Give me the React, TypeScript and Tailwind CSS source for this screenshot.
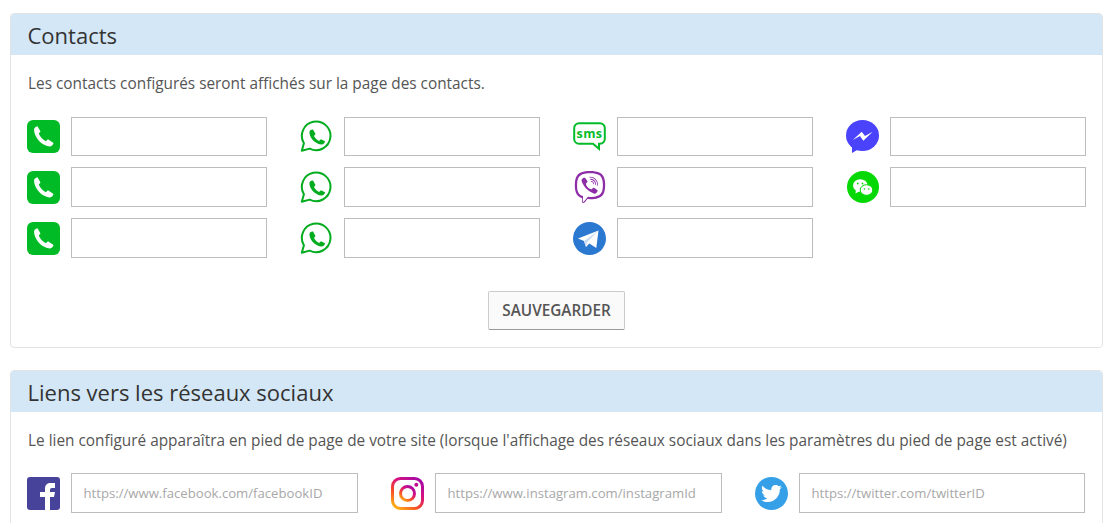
import React from "react";
import { FaViber, FaTwitter } from "react-icons/fa";

const PhoneIcon = () => (
  <svg width="33" height="33" viewBox="0 0 33 33">
    <rect width="33" height="33" rx="6" fill="#00bb26" />
    <path
      d="M7 9.500C7 8 8.500 6.500 10.500 6.200L13.500 11.500L11.800 13.500C12.800 16.500 15.800 19.800 18.800 21.300L21 19.300L26.500 23C26 25 24.500 26.500 22.500 26.500C14.500 25.500 7.500 18 7 9.500Z"
      fill="white"
    />
  </svg>
);

const WhatsappIcon = () => (
  <svg width="33" height="33" viewBox="0 0 33 33">
    <path
      d="M1.800 30.800L3.900 23.200A14.300 14.300 0 1 1 9.700 28.600Z"
      fill="white"
      stroke="#04ac1f"
      strokeWidth="2"
      strokeLinejoin="round"
    />
    <path
      d="M9.500 11.500C10 10 11.500 9.200 13 9.500L15.500 14L14 16C15 18 17 20 19 21L21 19.200L25 21.300C25 23.300 23 24.800 21 24.500C14.500 23.500 8.800 17 9.500 11.500Z"
      fill="#04ac1f"
    />
  </svg>
);

const SmsIcon = () => (
  <svg width="33" height="29" viewBox="0 0 33 29">
    <path
      d="M6 1.200h21a4.800 4.800 0 0 1 4.800 4.800v11a4.800 4.800 0 0 1-4.800 4.800h-1v5l-6-5H6a4.800 4.800 0 0 1-4.800-4.800V6A4.800 4.800 0 0 1 6 1.200z"
      fill="white"
      stroke="#04bb2a"
      strokeWidth="2"
    />
    <text
      x="16.500"
      y="15.500"
      textAnchor="middle"
      fontSize="12.500"
      fontWeight="700"
      letterSpacing="0.4"
      fill="#04bb2a"
      fontFamily="'Open Sans', sans-serif"
    >
      sms
    </text>
  </svg>
);

const ViberIcon = () => (
  <div className="w-[33px] h-[33px] flex items-center justify-center">
    <FaViber className="text-[#8e2da8] w-[32px] h-[32px]" />
  </div>
);

const TelegramIcon = () => (
  <svg width="33" height="33" viewBox="0 0 33 33">
    <circle cx="16.500" cy="16.500" r="16.500" fill="#2b78d0" />
    <path d="M25.500 8.500L5 16.500L11 19L13 25L16.300 21.500L23.300 26Z" fill="white" />
    <path d="M25.500 8.500L11 19L13 25L13.800 20.500Z" fill="#c8dcf3" />
  </svg>
);

const MessengerIcon = () => (
  <svg width="33" height="33" viewBox="0 0 33 33">
    <ellipse cx="16.500" cy="15.500" rx="16.500" ry="15.500" fill="#4a43fb" />
    <path d="M6 25L6 33L13 29Z" fill="#4a43fb" />
    <path d="M6.700 20L15.700 11.700L19 16L26.700 11.700L17.300 20.700L14 16Z" fill="white" />
  </svg>
);

const WechatIcon = () => (
  <svg width="32" height="32" viewBox="0 0 32 32">
    <circle cx="16" cy="16" r="16" fill="#06d806" />
    <ellipse cx="13.300" cy="14.500" rx="7.300" ry="6.300" fill="white" />
    <path d="M9 18.500L8.500 22.500L13 20Z" fill="white" />
    <ellipse cx="19.500" cy="19" rx="6.300" ry="5.300" fill="white" stroke="#06d806" strokeWidth="1" />
    <circle cx="10.800" cy="12.500" r="0.900" fill="#06d806" />
    <circle cx="15.500" cy="12.500" r="0.900" fill="#06d806" />
    <circle cx="17.500" cy="18" r="0.800" fill="#06d806" />
    <circle cx="21.800" cy="18" r="0.800" fill="#06d806" />
  </svg>
);

const FacebookIcon = () => (
  <svg width="33" height="33" viewBox="0 0 33 33">
    <rect width="33" height="33" rx="3" fill="#47429a" />
    <path
      d="M13 33V20H13V15H18V11.500C18 8 20 6 24 6H28V11H25C23.500 11 23 11.700 23 13V15H28L27 20H23V33H18V20H13Z"
      fill="white"
    />
  </svg>
);

const InstagramIcon = () => (
  <svg width="33" height="33" viewBox="0 0 33 33">
    <defs>
      <linearGradient id="ig" x1="0.15" y1="1" x2="0.85" y2="0">
        <stop offset="0" stopColor="#fdb015" />
        <stop offset="0.35" stopColor="#f6482a" />
        <stop offset="0.65" stopColor="#d8127e" />
        <stop offset="1" stopColor="#a509a8" />
      </linearGradient>
    </defs>
    <rect x="1.500" y="1.500" width="30" height="30" rx="8" fill="none" stroke="url(#ig)" strokeWidth="3" />
    <circle cx="16.500" cy="16.500" r="7" fill="none" stroke="url(#ig)" strokeWidth="3" />
    <circle cx="25.300" cy="7.700" r="2" fill="#c00c94" />
  </svg>
);

const TwitterIcon = () => (
  <div className="w-[33px] h-[33px] rounded-full bg-[#35a0e8] flex items-center justify-center">
    <FaTwitter className="text-white w-[21px] h-[21px]" />
  </div>
);

const Field = ({
  icon,
  height,
  placeholder,
}: {
  icon: React.ReactNode;
  height: string;
  placeholder?: string;
}) => (
  <div className="flex items-center">
    <div className="w-[33px] flex justify-center shrink-0">{icon}</div>
    <input
      placeholder={placeholder}
      className={`ml-[11px] min-w-0 flex-1 border border-[#bdbdbd] bg-white px-[11.5px] text-[13.15px] text-[#555] outline-none placeholder:text-[#a8a8a8] ${height}`}
    />
  </div>
);

const Panel = ({
  title,
  text,
  children,
}: {
  title: string;
  text: string;
  children: React.ReactNode;
}) => (
  <section className="rounded-[4px] border border-[#e3e3e3] bg-white overflow-hidden">
    <h2 className="bg-[#d4e7f6] h-[41px] pl-[16.5px] text-[22px] leading-[42px] text-[#333]">
      {title}
    </h2>
    <div className="pt-[19px] px-[16px]">
      <p className="ml-[1px] text-[15.36px] leading-[20px] text-[#555]">{text}</p>
      {children}
    </div>
  </section>
);

export default function App() {
  return (
    <div className="h-[523px] overflow-hidden bg-white pt-[13px] pl-[10px] pr-[9px] font-['Open_Sans',sans-serif]">
      <Panel
        title="Contacts"
        text="Les contacts configurés seront affichés sur la page des contacts."
      >
        <div className="mt-[23px] grid grid-cols-[240px_240px_240px_240px] gap-x-[33px] gap-y-[11px]">
          <Field icon={<PhoneIcon />} height="h-[39px]" />
          <Field icon={<WhatsappIcon />} height="h-[39px]" />
          <Field icon={<SmsIcon />} height="h-[39px]" />
          <Field icon={<MessengerIcon />} height="h-[39px]" />
          <Field icon={<PhoneIcon />} height="h-[40px]" />
          <Field icon={<WhatsappIcon />} height="h-[40px]" />
          <Field icon={<ViberIcon />} height="h-[40px]" />
          <Field icon={<WechatIcon />} height="h-[40px]" />
          <Field icon={<PhoneIcon />} height="h-[40px]" />
          <Field icon={<WhatsappIcon />} height="h-[40px]" />
          <Field icon={<TelegramIcon />} height="h-[40px]" />
        </div>
        <div className="flex justify-center mt-[33px] mb-[17px]">
          <button className="h-[39px] w-[137px] rounded-[2px] border border-[#ccc] border-b-[#999] bg-[#fafafa] text-[15.3px] font-semibold text-[#555]">
            SAUVEGARDER
          </button>
        </div>
      </Panel>
      <div className="mt-[22px]">
        <Panel
          title="Liens vers les réseaux sociaux"
          text="Le lien configuré apparaîtra en pied de page de votre site (lorsque l'affichage des réseaux sociaux dans les paramètres du pied de page est activé)"
        >
          <div className="mt-[22px] mb-[17px] grid grid-cols-[331px_331px_330px] gap-x-[33px]">
            <Field
              icon={<FacebookIcon />}
              height="h-[40px]"
              placeholder="https://www.facebook.com/facebookID"
            />
            <Field
              icon={<InstagramIcon />}
              height="h-[40px]"
              placeholder="https://www.instagram.com/instagramId"
            />
            <Field
              icon={<TwitterIcon />}
              height="h-[40px]"
              placeholder="https://twitter.com/twitterID"
            />
          </div>
        </Panel>
      </div>
    </div>
  );
}
